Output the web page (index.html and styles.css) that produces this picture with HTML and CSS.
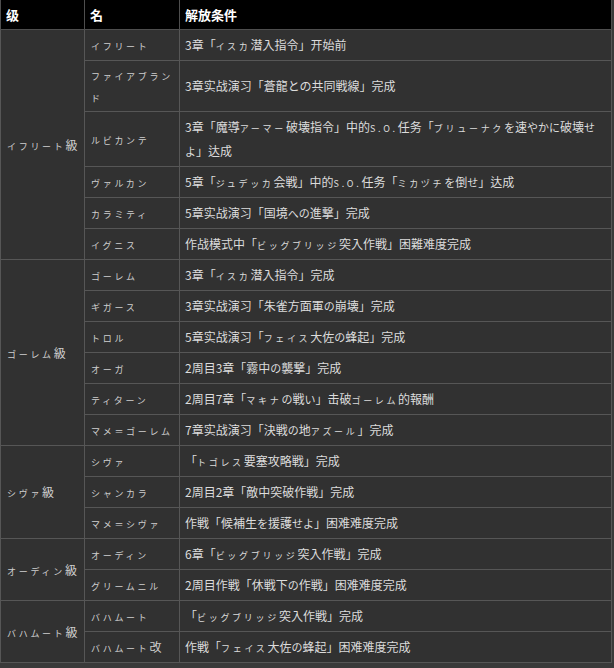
FILE: index.html
```html
<!DOCTYPE html>
<html lang="ja">
<head>
    <meta charset="UTF-8">
    <title>召喚獣 解放条件</title>
    <link rel="stylesheet" href="styles.css">
</head>
<body>
    <table class="unlock-table">
        <colgroup>
            <col class="col-rank">
            <col class="col-name">
            <col class="col-cond">
        </colgroup>
        <thead>
            <tr>
                <th>级</th>
                <th>名</th>
                <th>解放条件</th>
            </tr>
        </thead>
        <tbody>
            <!-- イフリート -->
            <tr>
                <td class="rank" rowspan="6"><span class="k">イフリート</span>級</td>
                <td class="name"><span class="k">イフリート</span></td>
                <td>3章「<span class="k">イスカ</span>潜入指令」开始前</td>
            </tr>
            <tr>
                <td class="name"><span class="k">ファイアブランド</span></td>
                <td>3章实战演习「蒼龍との共同戦線」完成</td>
            </tr>
            <tr>
                <td class="name"><span class="k">ルビカンテ</span></td>
                <td>3章「魔導<span class="k">アーマー</span>破壊指令」中的<span class="k">S.O.</span>任务「<span class="k">ブリューナク</span><span class="h">を</span>速<span class="h">やか</span><span class="h">に</span>破壊<span class="h">せよ</span>」达成</td>
            </tr>
            <tr>
                <td class="name"><span class="k">ヴァルカン</span></td>
                <td>5章「<span class="k">ジュデッカ</span>会戦」中的<span class="k">S.O.</span>任务「<span class="k">ミカヅチ</span><span class="h">を</span>倒<span class="h">せ</span>」达成</td>
            </tr>
            <tr>
                <td class="name"><span class="k">カラミティ</span></td>
                <td>5章实战演习「国境<span class="h">へ</span><span class="h">の</span>進撃」完成</td>
            </tr>
            <tr>
                <td class="name"><span class="k">イグニス</span></td>
                <td>作战模式中「<span class="k">ビッグブリッジ</span>突入作戦」困難难度完成</td>
            </tr>

            <!-- ゴーレム -->
            <tr>
                <td class="rank" rowspan="6"><span class="k">ゴーレム</span>級</td>
                <td class="name"><span class="k">ゴーレム</span></td>
                <td>3章「<span class="k">イスカ</span>潜入指令」完成</td>
            </tr>
            <tr>
                <td class="name"><span class="k">ギガース</span></td>
                <td>3章实战演习「朱雀方面軍<span class="h">の</span>崩壊」完成</td>
            </tr>
            <tr>
                <td class="name"><span class="k">トロル</span></td>
                <td>5章实战演习「<span class="k">フェイス</span>大佐<span class="h">の</span>蜂起」完成</td>
            </tr>
            <tr>
                <td class="name"><span class="k">オーガ</span></td>
                <td>2周目3章「霧中<span class="h">の</span>襲撃」完成</td>
            </tr>
            <tr>
                <td class="name"><span class="k">ティターン</span></td>
                <td>2周目7章「<span class="k">マキナ</span><span class="h">の</span>戦<span class="h">い</span>」击破<span class="k">ゴーレム</span>的報酬</td>
            </tr>
            <tr>
                <td class="name"><span class="k">マメ＝ゴーレム</span></td>
                <td>7章实战演习「決戦<span class="h">の</span>地<span class="k">アズール</span>」完成</td>
            </tr>

            <!-- シヴァ -->
            <tr>
                <td class="rank" rowspan="3"><span class="k">シヴァ</span>級</td>
                <td class="name"><span class="k">シヴァ</span></td>
                <td>「<span class="k">トゴレス</span>要塞攻略戦」完成</td>
            </tr>
            <tr>
                <td class="name"><span class="k">シャンカラ</span></td>
                <td>2周目2章「敵中突破作戦」完成</td>
            </tr>
            <tr>
                <td class="name"><span class="k">マメ＝シヴァ</span></td>
                <td>作戦「候補生<span class="h">を</span>援護<span class="h">せよ</span>」困难难度完成</td>
            </tr>

            <!-- オーディン -->
            <tr>
                <td class="rank" rowspan="2"><span class="k">オーディン</span>級</td>
                <td class="name"><span class="k">オーディン</span></td>
                <td>6章「<span class="k">ビッグブリッジ</span>突入作戦」完成</td>
            </tr>
            <tr>
                <td class="name"><span class="k">グリームニル</span></td>
                <td>2周目作戦「休戦下<span class="h">の</span>作戦」困难难度完成</td>
            </tr>

            <!-- バハムート -->
            <tr>
                <td class="rank" rowspan="2"><span class="k">バハムート</span>級</td>
                <td class="name"><span class="k">バハムート</span></td>
                <td>「<span class="k">ビッグブリッジ</span>突入作戦」完成</td>
            </tr>
            <tr>
                <td class="name"><span class="k">バハムート</span>改</td>
                <td>作戦「<span class="k">フェイス</span>大佐<span class="h">の</span>蜂起」困难难度完成</td>
            </tr>
        </tbody>
    </table>
</body>
</html>
```

FILE: styles.css
```css
body {
    margin: 0;
    padding: 0;
    background-color: #3a3a3a;
    font-family: "Noto Sans CJK SC", "Noto Sans CJK JP", sans-serif;
}

.unlock-table {
    width: 612px;
    border-collapse: collapse;
    table-layout: fixed;
    font-size: 12px;
    color: #dcdcdc;
}

.col-rank {
    width: 84px;
}

.col-name {
    width: 95px;
}

.unlock-table th {
    height: 29px;
    padding: 0 5px;
    background-color: #000000;
    color: #ffffff;
    font-size: 13px;
    font-weight: bold;
    text-align: left;
    border: 1px solid #4e4e4e;
    border-top: none;
}

.unlock-table td {
    padding: 3px 5px;
    line-height: 24px;
    background-color: #313131;
    border: 1px solid #565656;
    vertical-align: middle;
}

.unlock-table td.name {
    padding-left: 6px;
    line-height: 22px;
    color: #cfcfcf;
}

.unlock-table td.rank {
    padding-left: 6px;
    color: #cfcfcf;
}

/* 半角っぽい小さいカナ */
.k {
    font-family: "Noto Sans CJK JP", sans-serif;
    font-size: 9px;
    line-height: 1;
    letter-spacing: 2.7px;
}

.h {
    font-family: "Noto Sans CJK JP", sans-serif;
    font-size: 11px;
    line-height: 1;
}
```
